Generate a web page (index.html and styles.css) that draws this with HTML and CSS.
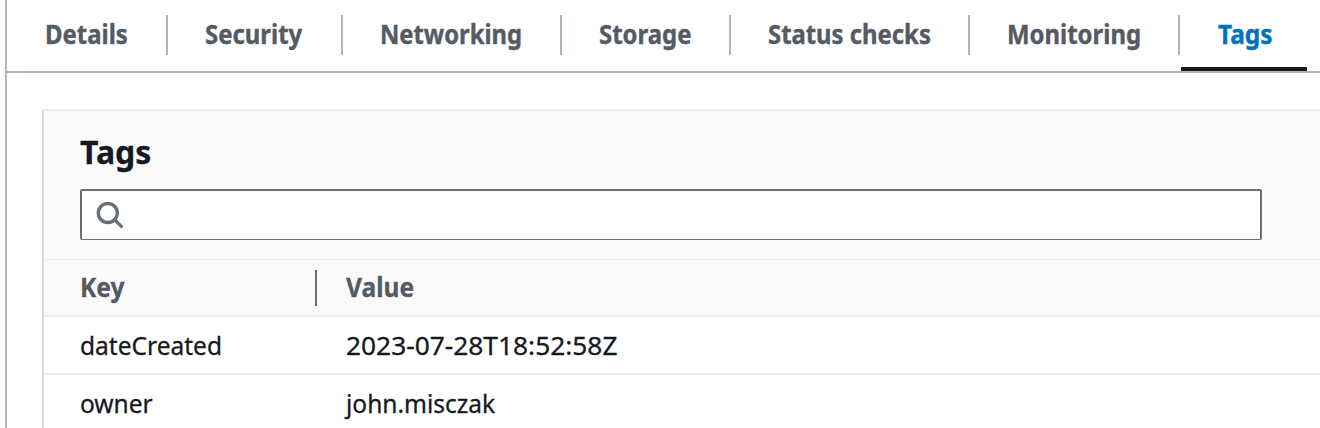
FILE: index.html
```html
<!DOCTYPE html>
<html lang="en">
<head>
<meta charset="utf-8">
<title>Instance tags</title>
<link rel="stylesheet" href="styles.css">
</head>
<body>
<main class="panel">
  <nav class="tabs">
    <a class="tab details"><span class="label">Details</span></a>
    <a class="tab security"><span class="label">Security</span></a>
    <a class="tab networking"><span class="label">Networking</span></a>
    <a class="tab storage"><span class="label">Storage</span></a>
    <a class="tab status"><span class="label">Status checks</span></a>
    <a class="tab monitoring"><span class="label">Monitoring</span></a>
    <a class="tab active"><span class="label">Tags</span></a>
  </nav>
  <section class="card">
    <header class="card-header">
      <h2 class="title"><span class="label">Tags</span></h2>
      <div class="search">
        <svg class="search-icon" width="30" height="30" viewBox="0 0 30 30" fill="none" stroke="#687078" stroke-width="3.4"><circle cx="11.8" cy="11" r="9.5"/><path d="M18.4 17.6L26.4 25.4"/></svg>
      </div>
    </header>
    <div class="row head">
      <div class="key"><span class="label">Key</span></div>
      <div class="value"><span class="label">Value</span></div>
    </div>
    <div class="row">
      <div class="key"><span class="label">dateCreated</span></div>
      <div class="value"><span class="label timestamp">2023-07-28T18:52:58Z</span></div>
    </div>
    <div class="row">
      <div class="key"><span class="label">owner</span></div>
      <div class="value"><span class="label">john.misczak</span></div>
    </div>
  </section>
</main>
</body>
</html>
```
FILE: styles.css
```css
* { box-sizing: border-box; }
body {
  margin: 0;
  height: 428px;
  overflow: hidden;
  background: #fff;
  color: #16191f;
  font-family: "Noto Sans", "Open Sans", sans-serif;
  font-size: 26px;
}
.label {
  display: inline-block;
  white-space: nowrap;
  transform: scaleX(.943);
  transform-origin: 0 50%;
  -webkit-text-stroke: .3px currentColor;
}
.panel { margin-left: 5px; height: 428px; border-left: 2px solid #b0b8bd; }
.tabs { display: flex; height: 73px; border-bottom: 2px solid #aab7b8; }
.tab {
  flex: none;
  padding-left: 37.4px;
  line-height: 38px;
  height: 40px;
  margin-top: 15px;
  border-right: 2px solid #aab7b8;
  font-weight: 700;
  color: #545b64;
}
.tab .label { transform: scaleX(.92); -webkit-text-stroke-width: .4px; }
.details { width: 161px; padding-left: 38.4px; }
.security { width: 175px; }
.networking { width: 219px; }
.networking .label { transform: scaleX(.915); }
.storage { width: 169px; padding-left: 37px; }
.status { width: 239px; }
.status .label { transform: scaleX(.917); }
.monitoring { width: 210px; }
.active {
  width: 126px;
  height: 56px;
  margin-left: 1px;
  border-right: 0;
  border-bottom: 4px solid #16191f;
  color: #0073bb;
}
.active .label { transform: scaleX(.94); }
.card {
  margin: 36px 0 0 35px;
  height: 340px;
  border: 2px solid #d5dbdb;
  border-top-color: #eaeded;
  border-right: 0;
  border-top-left-radius: 2px;
}
.card-header { height: 149px; padding: 23px 58px 0 36px; background: #fafafa; border-bottom: 1px solid #eaeded; }
.title { margin: 0; font-size: 32px; line-height: 36px; height: 55px; }
.title .label { transform: none; }
.search {
  height: 51px;
  padding: 11px 14px;
  background: #fff;
  border: 2px solid #687078;
  border-bottom-width: 1px;
  border-radius: 2px;
}
.search-icon { display: block; }
.row { display: flex; align-items: center; height: 58px; border-bottom: 2px solid #eaeded; }
.key { width: 273px; padding-left: 36px; line-height: 36px; }
.value { padding-left: 29px; line-height: 36px; }
.timestamp { transform: scaleX(1.012); }
.head { height: 57px; background: #fafafa; color: #545b64; font-weight: 700; }
.head > div { height: 36px; line-height: 34px; }
.head .key { border-right: 2px solid #687078; }
```
